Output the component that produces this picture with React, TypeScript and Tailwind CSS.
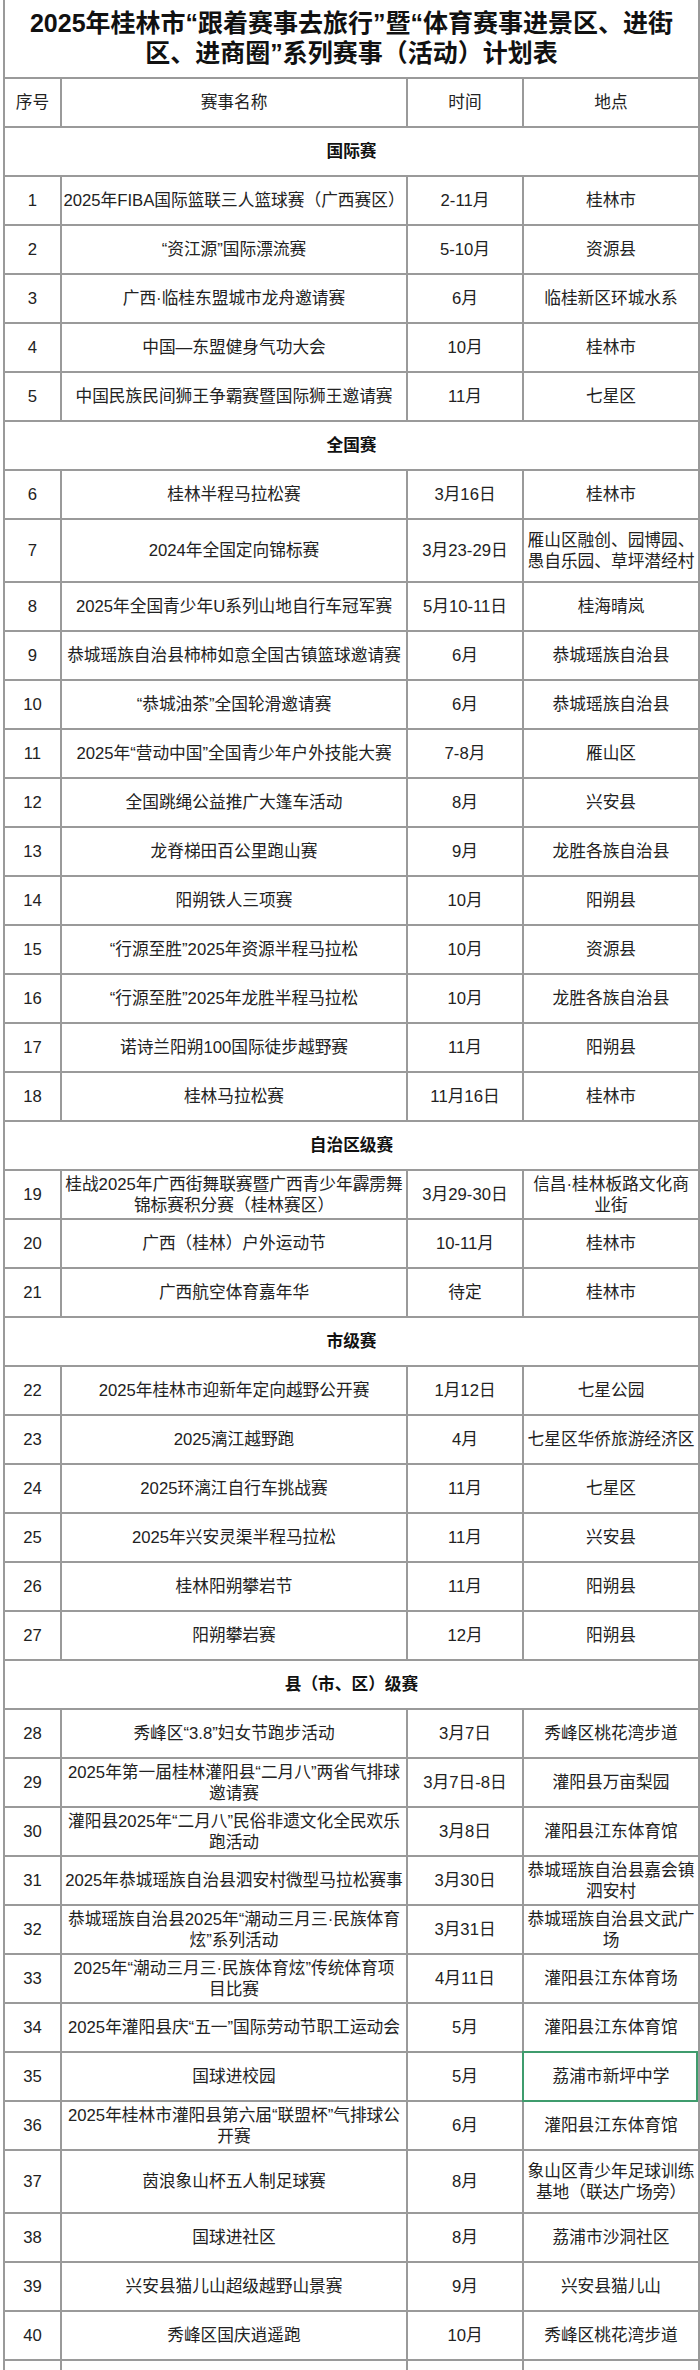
import React from "react";

type Row = {
  no: number;
  name: string[];
  time: string;
  place: string[];
  tall?: boolean;
  picked?: boolean;
};

type Group = { title: string; rows: Row[] };

const groups: Group[] = [
  {
    title: "国际赛",
    rows: [
      { no: 1, name: ["2025年FIBA国际篮联三人篮球赛（广西赛区）"], time: "2-11月", place: ["桂林市"] },
      { no: 2, name: ["“资江源”国际漂流赛"], time: "5-10月", place: ["资源县"] },
      { no: 3, name: ["广西·临桂东盟城市龙舟邀请赛"], time: "6月", place: ["临桂新区环城水系"] },
      { no: 4, name: ["中国—东盟健身气功大会"], time: "10月", place: ["桂林市"] },
      { no: 5, name: ["中国民族民间狮王争霸赛暨国际狮王邀请赛"], time: "11月", place: ["七星区"] },
    ],
  },
  {
    title: "全国赛",
    rows: [
      { no: 6, name: ["桂林半程马拉松赛"], time: "3月16日", place: ["桂林市"] },
      { no: 7, name: ["2024年全国定向锦标赛"], time: "3月23-29日", place: ["雁山区融创、园博园、", "愚自乐园、草坪潜经村"], tall: true },
      { no: 8, name: ["2025年全国青少年U系列山地自行车冠军赛"], time: "5月10-11日", place: ["桂海晴岚"] },
      { no: 9, name: ["恭城瑶族自治县柿柿如意全国古镇篮球邀请赛"], time: "6月", place: ["恭城瑶族自治县"] },
      { no: 10, name: ["“恭城油茶”全国轮滑邀请赛"], time: "6月", place: ["恭城瑶族自治县"] },
      { no: 11, name: ["2025年“营动中国”全国青少年户外技能大赛"], time: "7-8月", place: ["雁山区"] },
      { no: 12, name: ["全国跳绳公益推广大篷车活动"], time: "8月", place: ["兴安县"] },
      { no: 13, name: ["龙脊梯田百公里跑山赛"], time: "9月", place: ["龙胜各族自治县"] },
      { no: 14, name: ["阳朔铁人三项赛"], time: "10月", place: ["阳朔县"] },
      { no: 15, name: ["“行源至胜”2025年资源半程马拉松"], time: "10月", place: ["资源县"] },
      { no: 16, name: ["“行源至胜”2025年龙胜半程马拉松"], time: "10月", place: ["龙胜各族自治县"] },
      { no: 17, name: ["诺诗兰阳朔100国际徒步越野赛"], time: "11月", place: ["阳朔县"] },
      { no: 18, name: ["桂林马拉松赛"], time: "11月16日", place: ["桂林市"] },
    ],
  },
  {
    title: "自治区级赛",
    rows: [
      { no: 19, name: ["桂战2025年广西街舞联赛暨广西青少年霹雳舞", "锦标赛积分赛（桂林赛区）"], time: "3月29-30日", place: ["信昌·桂林板路文化商", "业街"] },
      { no: 20, name: ["广西（桂林）户外运动节"], time: "10-11月", place: ["桂林市"] },
      { no: 21, name: ["广西航空体育嘉年华"], time: "待定", place: ["桂林市"] },
    ],
  },
  {
    title: "市级赛",
    rows: [
      { no: 22, name: ["2025年桂林市迎新年定向越野公开赛"], time: "1月12日", place: ["七星公园"] },
      { no: 23, name: ["2025漓江越野跑"], time: "4月", place: ["七星区华侨旅游经济区"] },
      { no: 24, name: ["2025环漓江自行车挑战赛"], time: "11月", place: ["七星区"] },
      { no: 25, name: ["2025年兴安灵渠半程马拉松"], time: "11月", place: ["兴安县"] },
      { no: 26, name: ["桂林阳朔攀岩节"], time: "11月", place: ["阳朔县"] },
      { no: 27, name: ["阳朔攀岩赛"], time: "12月", place: ["阳朔县"] },
    ],
  },
  {
    title: "县（市、区）级赛",
    rows: [
      { no: 28, name: ["秀峰区“3.8”妇女节跑步活动"], time: "3月7日", place: ["秀峰区桃花湾步道"] },
      { no: 29, name: ["2025年第一届桂林灌阳县“二月八”两省气排球", "邀请赛"], time: "3月7日-8日", place: ["灌阳县万亩梨园"] },
      { no: 30, name: ["灌阳县2025年“二月八”民俗非遗文化全民欢乐", "跑活动"], time: "3月8日", place: ["灌阳县江东体育馆"] },
      { no: 31, name: ["2025年恭城瑶族自治县泗安村微型马拉松赛事"], time: "3月30日", place: ["恭城瑶族自治县嘉会镇", "泗安村"] },
      { no: 32, name: ["恭城瑶族自治县2025年“潮动三月三·民族体育", "炫”系列活动"], time: "3月31日", place: ["恭城瑶族自治县文武广", "场"] },
      { no: 33, name: ["2025年“潮动三月三·民族体育炫”传统体育项", "目比赛"], time: "4月11日", place: ["灌阳县江东体育场"] },
      { no: 34, name: ["2025年灌阳县庆“五一”国际劳动节职工运动会"], time: "5月", place: ["灌阳县江东体育馆"] },
      { no: 35, name: ["国球进校园"], time: "5月", place: ["荔浦市新坪中学"], picked: true },
      { no: 36, name: ["2025年桂林市灌阳县第六届“联盟杯”气排球公", "开赛"], time: "6月", place: ["灌阳县江东体育馆"] },
      { no: 37, name: ["茵浪象山杯五人制足球赛"], time: "8月", place: ["象山区青少年足球训练", "基地（联达广场旁）"], tall: true },
      { no: 38, name: ["国球进社区"], time: "8月", place: ["荔浦市沙洞社区"] },
      { no: 39, name: ["兴安县猫儿山超级越野山景赛"], time: "9月", place: ["兴安县猫儿山"] },
      { no: 40, name: ["秀峰区国庆逍遥跑"], time: "10月", place: ["秀峰区桃花湾步道"] },
    ],
  },
];

const cols = "grid grid-cols-[57px_346px_116px_1fr]";

function Lines({ lines }: { lines: string[] }) {
  return (
    <div className="flex flex-col items-center leading-[21px]">
      {lines.map((l) => (
        <span key={l} className="whitespace-nowrap">
          {l}
        </span>
      ))}
    </div>
  );
}

function DataRow({ row }: { row: Row }) {
  return (
    <div className={`${cols} ${row.tall ? "h-[63px]" : "h-[49px]"} border-b-2 border-[#9a9a9a]`}>
      <div className="flex items-center justify-center border-r-2 border-[#9a9a9a]">{row.no}</div>
      <div className="flex items-center justify-center border-r-2 border-[#9a9a9a]">
        <Lines lines={row.name} />
      </div>
      <div className="flex items-center justify-center border-r-2 border-[#9a9a9a] whitespace-nowrap">{row.time}</div>
      <div className="relative flex items-center justify-center">
        <Lines lines={row.place} />
        {row.picked && (
          <div className="absolute -left-[2px] -top-[2px] -bottom-[2px] right-0 z-10 border-2 border-[#3f9c6d]" />
        )}
      </div>
    </div>
  );
}

export default function App() {
  return (
    <div className="h-[2370px] overflow-hidden bg-white text-[16.7px] text-[#222] font-['Liberation_Sans','Noto_Sans_CJK_SC',sans-serif]">
      <div className="ml-[3px] w-[697px] border-x-2 border-[#9a9a9a]">
        {/* title */}
        <div className="flex h-[79px] flex-col items-center justify-center border-b-2 border-[#9a9a9a] pb-[2px] text-[25px] font-bold leading-[30px] text-[#111]">
          <span className="whitespace-nowrap">2025年桂林市“跟着赛事去旅行”暨“体育赛事进景区、进街</span>
          <span className="whitespace-nowrap">区、进商圈”系列赛事（活动）计划表</span>
        </div>

        {/* header */}
        <div className={`${cols} h-[49px] border-b-2 border-[#9a9a9a]`}>
          <div className="flex items-center justify-center border-r-2 border-[#9a9a9a]">序号</div>
          <div className="flex items-center justify-center border-r-2 border-[#9a9a9a]">赛事名称</div>
          <div className="flex items-center justify-center border-r-2 border-[#9a9a9a]">时间</div>
          <div className="flex items-center justify-center">地点</div>
        </div>

        {groups.map((g) => (
          <div key={g.title}>
            <div className="flex h-[49px] items-center justify-center border-b-2 border-[#9a9a9a] font-bold text-[#111]">
              {g.title}
            </div>
            {g.rows.map((r) => (
              <DataRow key={r.no} row={r} />
            ))}
          </div>
        ))}

        {/* cut-off row at the bottom */}
        <div className={`${cols} h-[49px]`}>
          <div className="border-r-2 border-[#9a9a9a]" />
          <div className="border-r-2 border-[#9a9a9a]" />
          <div className="border-r-2 border-[#9a9a9a]" />
          <div />
        </div>
      </div>
    </div>
  );
}
